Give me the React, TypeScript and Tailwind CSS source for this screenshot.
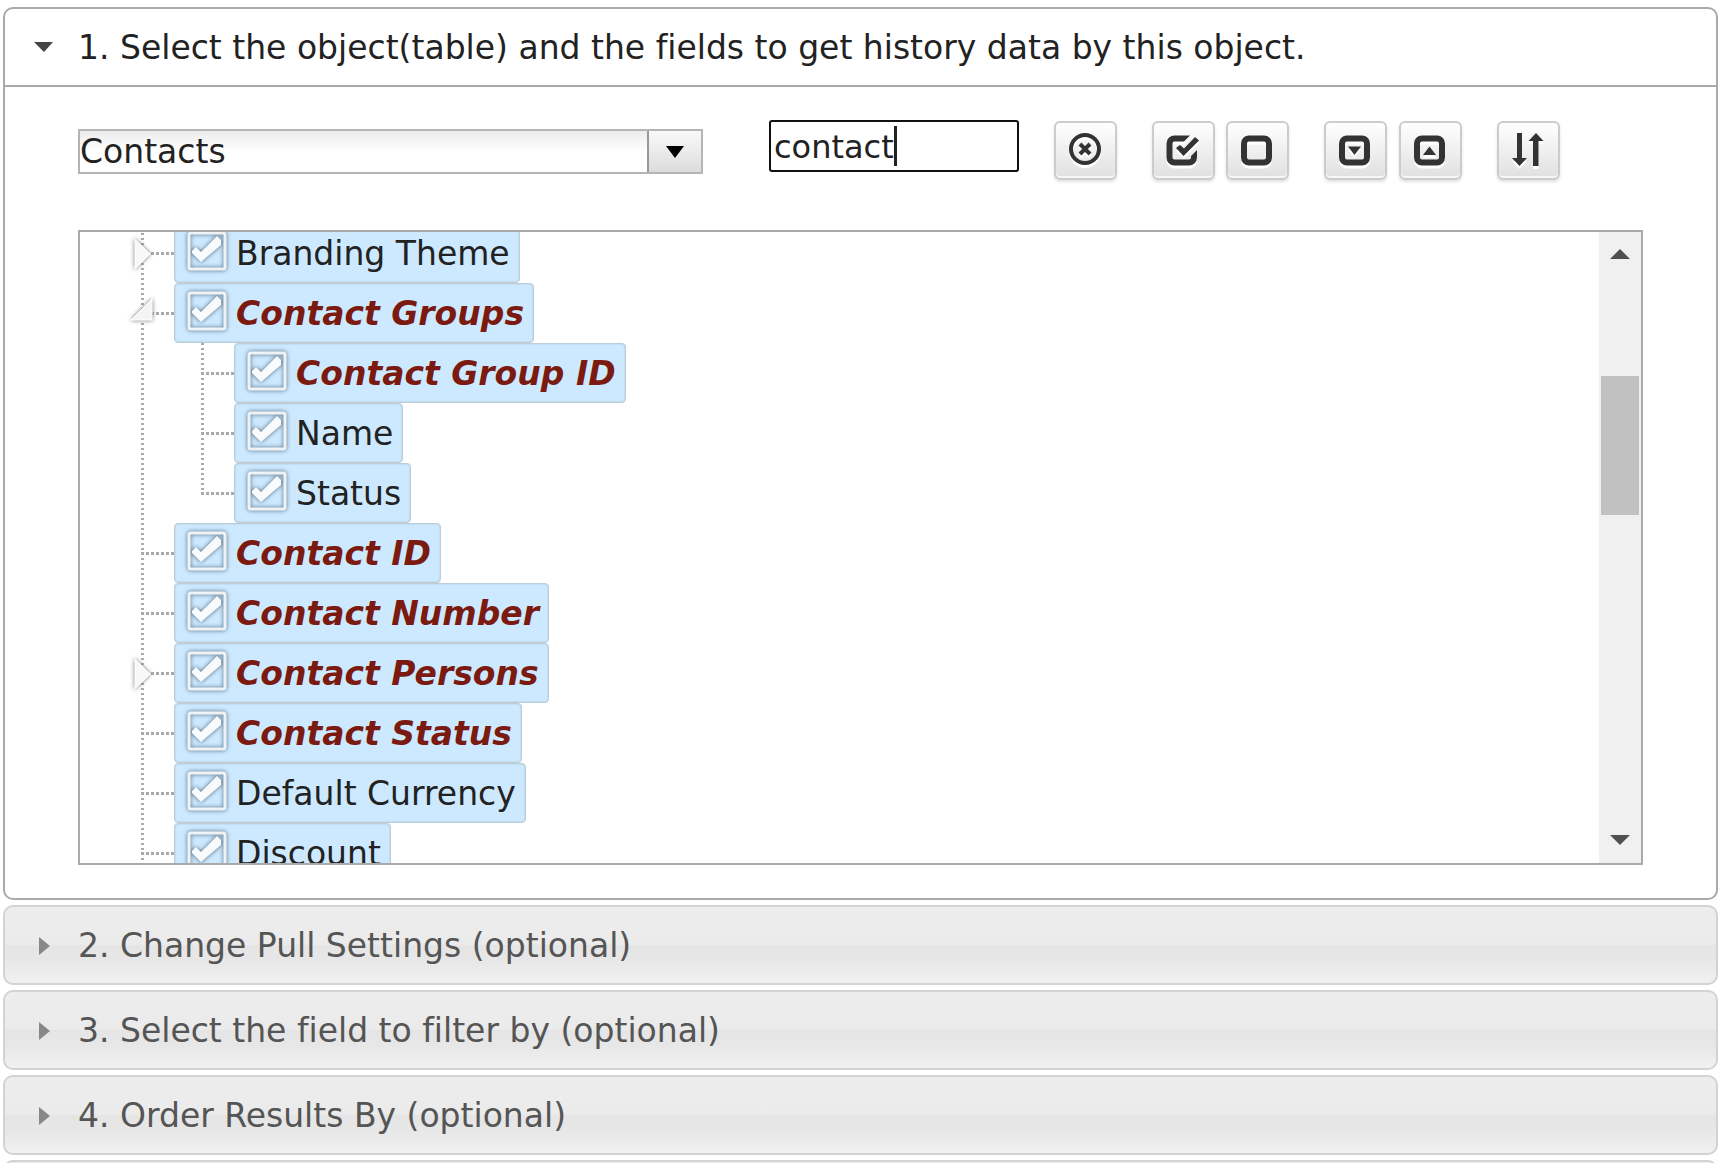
import React, { useState } from 'react';

interface Field {
  id: string;
  label: string;
  match?: boolean;
  state?: 'open' | 'closed';
  children?: Field[];
}

const fields: Field[] = [
  { id: 'branding', label: 'Branding Theme', state: 'closed' },
  {
    id: 'groups',
    label: 'Contact Groups',
    match: true,
    state: 'open',
    children: [
      { id: 'group_id', label: 'Contact Group ID', match: true },
      { id: 'group_name', label: 'Name' },
      { id: 'group_status', label: 'Status' }
    ]
  },
  { id: 'contact_id', label: 'Contact ID', match: true },
  { id: 'number', label: 'Contact Number', match: true },
  { id: 'persons', label: 'Contact Persons', match: true, state: 'closed' },
  { id: 'status', label: 'Contact Status', match: true },
  { id: 'currency', label: 'Default Currency' },
  { id: 'discount', label: 'Discount' }
];

const sections = [
  '2. Change Pull Settings (optional)',
  '3. Select the field to filter by (optional)',
  '4. Order Results By (optional)'
];

const barClass =
  'flex h-20 w-full shrink-0 items-center rounded-[10px] border-2 border-[#d3d3d3] bg-[linear-gradient(to_bottom,#ededed_0%,#ebebeb_49%,#e5e5e5_51%,#e7e7e7_70%,#f1f1f1_100%)] pt-[2px] text-left text-[#555555]';

function ToolButton({ label, children }: { label: string; children: React.ReactNode }) {
  return (
    <button
      aria-label={label}
      className="flex h-[59px] w-[63px] items-center justify-center rounded-md border-2 border-[#cccccc] bg-linear-to-b from-white to-[#e0e0e0] text-[#333333] shadow-[inset_0_-2px_0_#f6f6f6,0_2px_3px_rgba(0,0,0,0.12)]"
    >
      <svg width="36" height="36" viewBox="0 0 36 36" fill="none" className="shrink-0 overflow-visible drop-shadow-[0_3px_0_#ffffff]">
        {children}
      </svg>
    </button>
  );
}

function Box() {
  return <rect x="4" y="5.5" width="25" height="24" rx="5" stroke="currentColor" strokeWidth="6" />;
}

function Expander({ state }: { state: 'open' | 'closed' }) {
  return (
    <button aria-label={state === 'open' ? 'Collapse' : 'Expand'} className="absolute top-3 -left-[14px] h-9 w-7">
      <svg width="28" height="36" viewBox="0 0 28 36" className="overflow-visible drop-shadow-[0_0_2px_#777777]">
        {state === 'open' ? (
          <path d="M25 4V25H4Z" fill="#f4f4f4" stroke="#ffffff" strokeWidth="1" />
        ) : (
          <path d="M8 4L23 19L8 34Z" fill="#f8f8f8" stroke="#ffffff" strokeWidth="1" />
        )}
      </svg>
    </button>
  );
}

function FieldRow({ field, last }: { field: Field; last: boolean }) {
  const [checked, setChecked] = useState(true);

  return (
    <li className="relative">
      {/* Guide lines */}
      <span
        className={`absolute top-0 left-0 w-[3px] bg-[repeating-linear-gradient(to_bottom,#aaaaaa_0_2px,#ffffff_2px_5px)] ${
          last ? 'h-8' : 'h-full'
        }`}
      />
      <div className="relative flex h-[60px] items-center">
        <span className="h-[3px] w-[33px] shrink-0 bg-[repeating-linear-gradient(to_right,#aaaaaa_0_3px,#ffffff_3px_5px)]" />
        {field.state && <Expander state={field.state} />}
        <label
          htmlFor={field.id}
          className={`flex h-[60px] items-center gap-2 rounded-[4px] border border-[#beccd6] bg-[#cce9ff] pr-[9px] pl-[11px] whitespace-nowrap shadow-[inset_0_0_2px_#a9c3d6] ${
            field.match ? 'font-bold text-[#7b1a10] italic' : 'text-[#222222]'
          }`}
        >
          <span className="mb-1 grid h-[42px] w-[42px] shrink-0">
            <input
              id={field.id}
              type="checkbox"
              checked={checked}
              onChange={() => setChecked(!checked)}
              className="col-start-1 row-start-1 appearance-none"
            />
            <svg
              width="42"
              height="42"
              viewBox="0 0 42 42"
              fill="none"
              className="pointer-events-none col-start-1 row-start-1 overflow-visible drop-shadow-[0_0_2px_#4a6478]"
            >
              <rect x="3" y="3" width="36" height="36" rx="2" stroke="#f0f3f5" strokeWidth="3" />
              {checked && <path d="M6 21L10 17L15 22L31 6L35 10V15L15 32L6 23Z" fill="#f9fafb" />}
            </svg>
          </span>
          <span className="pt-[2px]">{field.label}</span>
        </label>
      </div>
      {field.children && (
        <ul className="ml-[60px]">
          {field.children.map((child, idx) => (
            <FieldRow key={child.id} field={child} last={idx === field.children!.length - 1} />
          ))}
        </ul>
      )}
    </li>
  );
}

export default function App() {
  const [search, setSearch] = useState('contact');

  return (
    <div className="flex h-screen flex-col gap-[5px] overflow-hidden bg-white pt-[7px] pr-[10px] pl-[3px] font-['Verdana','DejaVu_Sans',sans-serif] text-[33px] leading-10 [font-variant-ligatures:none]">
      <section className="shrink-0 rounded-[10px] border-2 border-[#aaaaaa] bg-white">
        {/* Header */}
        <button className="flex h-[78px] w-full items-center border-b-2 border-[#aaaaaa] pt-[2px] text-left text-[#222222]">
          <svg width="73" height="20" viewBox="0 0 73 20" className="shrink-0" fill="#454545">
            <path d="M29 4H48L39 14Z" />
          </svg>
          1. Select the object(table) and the fields to get history data by this object.
        </button>

        <div className="pt-[33px] pr-[73px] pb-[33px] pl-[73px]">
          {/* Toolbar */}
          <div className="flex h-[62px] items-start text-[#222222]">
            <div className="mt-[9px] flex h-[45px] w-[625px] border-2 border-[#b5b5b5]">
              <select
                aria-label="Object"
                className="min-w-0 flex-1 appearance-none bg-linear-to-b from-[#ececec] to-white to-50% leading-10 outline-none"
              >
                <option>Contacts</option>
              </select>
              <span className="flex w-[54px] items-center justify-center border-l-2 border-[#999999] bg-linear-to-b from-[#fafafa] to-[#dcdcdc]">
                <svg width="18" height="12" viewBox="0 0 18 12">
                  <path d="M0 0H18L9 12Z" fill="#000000" />
                </svg>
              </span>
            </div>

            <div className="relative ml-[66px]">
              <input
                type="text"
                aria-label="Search fields"
                value={search}
                onChange={e => setSearch(e.target.value)}
                className="block h-[52px] w-[250px] rounded-[3px] border-2 border-[#101010] px-[3px] pt-[2px] text-[32px] caret-transparent outline-none"
              />
              <span className="absolute top-[6px] left-[125px] h-10 w-[3px] bg-[#222222]" />
            </div>

            <div className="ml-[35px] flex gap-[35px] pt-px">
              <ToolButton label="Clear search">
                <circle cx="17" cy="16" r="14" stroke="currentColor" strokeWidth="4" />
                <path d="M12 11L22 21M22 11L12 21" stroke="currentColor" strokeWidth="4" />
              </ToolButton>
              <div className="flex gap-[11px]">
                <ToolButton label="Select all">
                  <path
                    fill="currentColor"
                    d="M24 2.5H8.500a8 8 0 0 0-8 8v14a8 8 0 0 0 8 8H23a8 8 0 0 0 8-8V17l-6 6v1.500a2 2 0 0 1-2 2H8.500a2 2 0 0 1-2-2v-14a2 2 0 0 1 2-2H18z"
                  />
                  <path fill="currentColor" d="M10 15L14 12L18 15.5L29 4L33 7.5L17.5 23Z" />
                </ToolButton>
                <ToolButton label="Deselect all">
                  <Box />
                </ToolButton>
              </div>
              <div className="flex gap-3">
                <ToolButton label="Expand all">
                  <Box />
                  <path fill="currentColor" d="M10 13.5H23L16.5 22Z" />
                </ToolButton>
                <ToolButton label="Collapse all">
                  <Box />
                  <path fill="currentColor" d="M10 22H23L16.5 13.5Z" />
                </ToolButton>
              </div>
              <ToolButton label="Sort">
                <path fill="currentColor" d="M6 0H11V25H16L8.500 33L1 25H6Z" />
                <path fill="currentColor" d="M22 33H27.500V8H32.500L25 0L17.500 8H22Z" />
              </ToolButton>
            </div>
          </div>

          {/* Field tree */}
          <div className="mt-12 flex h-[635px] overflow-hidden border-2 border-[#aaaaaa]">
            <ul className="-mt-[9px] flex-1 pl-[61px]">
              {fields.map(field => (
                <FieldRow key={field.id} field={field} last={false} />
              ))}
            </ul>
            <div className="flex w-[42px] flex-col items-center justify-between bg-[#f0f0f0] pt-[17px] pb-[18px]">
              <svg width="20" height="10" viewBox="0 0 20 10" fill="#505050">
                <path d="M0 10L10 0L20 10Z" />
              </svg>
              <div className="mt-[117px] mb-auto h-[139px] w-[38px] bg-[#c1c1c1]" />
              <svg width="20" height="10" viewBox="0 0 20 10" fill="#505050">
                <path d="M0 0L10 10L20 0Z" />
              </svg>
            </div>
          </div>
        </div>
      </section>

      {sections.map(title => (
        <button key={title} className={barClass}>
          <svg width="73" height="20" viewBox="0 0 73 20" className="shrink-0" fill="#888888">
            <path d="M34 1L45 10L34 19Z" />
          </svg>
          {title}
        </button>
      ))}
      <button aria-label="Next section" className={barClass} />
    </div>
  );
}
